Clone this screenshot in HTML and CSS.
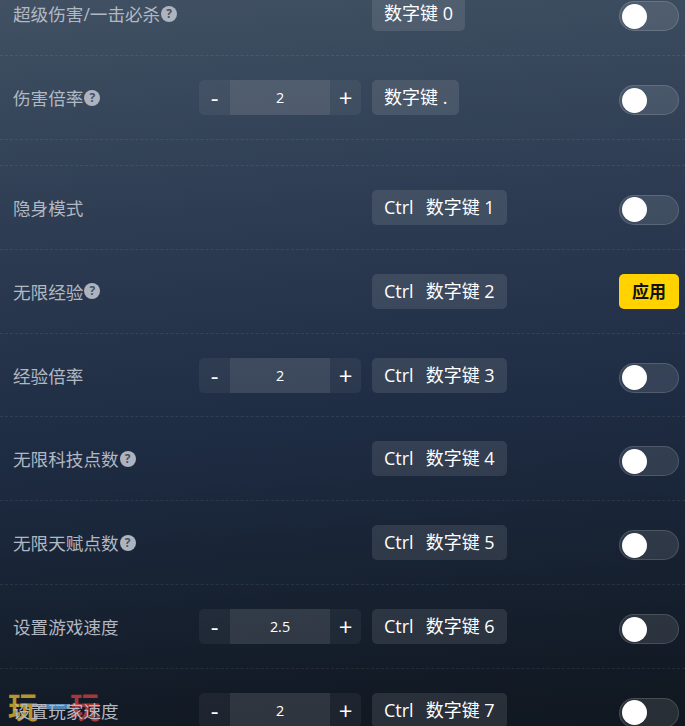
FILE: index.html
```html
<!DOCTYPE html>
<html lang="en">

<head>
    <meta charset="UTF-8">
    <meta name="viewport" content="width=device-width, initial-scale=1.0">
    <title>Cheats</title>
    <link rel="stylesheet" href="styles.css">
</head>

<body>
    <!-- watermark, behind the list -->
    <div class="mark">
        <span class="mark-gold">玩</span><span class="mark-bar"></span><span class="mark-red">玩</span>
    </div>

    <div class="list">
        <div class="row">
            <div class="name">超级伤害/一击必杀<span class="help">?</span></div>
            <div></div>
            <div class="keys"><span class="key">数字键 0</span></div>
            <div class="action"><span class="toggle"></span></div>
        </div>
        <div class="row">
            <div class="name">伤害倍率<span class="help">?</span></div>
            <div class="stepper"><span class="step">-</span><span class="value">2</span><span class="step">+</span></div>
            <div class="keys"><span class="key">数字键 .</span></div>
            <div class="action"><span class="toggle"></span></div>
        </div>

        <div class="spacer"></div>

        <div class="row">
            <div class="name">隐身模式</div>
            <div></div>
            <div class="keys"><span class="key"><span class="ctrl">Ctrl</span>数字键 1</span></div>
            <div class="action"><span class="toggle"></span></div>
        </div>
        <div class="row">
            <div class="name">无限经验<span class="help">?</span></div>
            <div></div>
            <div class="keys"><span class="key"><span class="ctrl">Ctrl</span>数字键 2</span></div>
            <div class="action"><span class="apply">应用</span></div>
        </div>
        <div class="row">
            <div class="name">经验倍率</div>
            <div class="stepper"><span class="step">-</span><span class="value">2</span><span class="step">+</span></div>
            <div class="keys"><span class="key"><span class="ctrl">Ctrl</span>数字键 3</span></div>
            <div class="action"><span class="toggle"></span></div>
        </div>
        <div class="row">
            <div class="name">无限科技点数<span class="help">?</span></div>
            <div></div>
            <div class="keys"><span class="key"><span class="ctrl">Ctrl</span>数字键 4</span></div>
            <div class="action"><span class="toggle"></span></div>
        </div>
        <div class="row">
            <div class="name">无限天赋点数<span class="help">?</span></div>
            <div></div>
            <div class="keys"><span class="key"><span class="ctrl">Ctrl</span>数字键 5</span></div>
            <div class="action"><span class="toggle"></span></div>
        </div>
        <div class="row">
            <div class="name">设置游戏速度</div>
            <div class="stepper"><span class="step">-</span><span class="value">2.5</span><span class="step">+</span></div>
            <div class="keys"><span class="key"><span class="ctrl">Ctrl</span>数字键 6</span></div>
            <div class="action"><span class="toggle"></span></div>
        </div>
        <div class="row">
            <div class="name">设置玩家速度</div>
            <div class="stepper"><span class="step">-</span><span class="value">2</span><span class="step">+</span></div>
            <div class="keys"><span class="key"><span class="ctrl">Ctrl</span>数字键 7</span></div>
            <div class="action"><span class="toggle"></span></div>
        </div>
    </div>
</body>

</html>
```

FILE: styles.css
```css
html,
body {
    height: 100%;
}

body {
    margin: 0;
    overflow: hidden;
    font-family: "Open Sans", "Noto Sans CJK SC", sans-serif;
    background: linear-gradient(175deg, #415163 0%, #2d3c52 30%, #1e2c43 58%, #121a25 92%, #10171f 100%);
    color: #fff;
}

.list {
    position: relative;
    margin-top: -27.7px;
}

.row {
    height: 83.83px;
    box-sizing: border-box;
    padding: 0 6px 0 13px;
    display: grid;
    grid-template-columns: 186px 173px 1fr auto;
    align-items: center;
    border-bottom: 1px dashed rgba(255, 255, 255, 0.08);
}

.spacer {
    height: 26px;
    border-bottom: 1px dashed rgba(255, 255, 255, 0.08);
    box-sizing: border-box;
}

.name {
    display: flex;
    align-items: center;
    font-size: 17.6px;
    color: #b2b8c2;
}

.help {
    width: 16px;
    height: 16px;
    margin-left: 1px;
    border-radius: 50%;
    background: #adb3bf;
    color: #46525f;
    font-size: 12px;
    font-weight: bold;
    line-height: 16px;
    text-align: center;
}

.stepper {
    width: 162px;
    height: 35px;
    display: flex;
    border-radius: 5px;
    overflow: hidden;
    background: rgba(255, 255, 255, 0.05);
}

.step {
    width: 31px;
    text-align: center;
    font-size: 24px;
    line-height: 35px;
}

.value {
    width: 100px;
    background: rgba(255, 255, 255, 0.08);
    text-align: center;
    font-size: 14.4px;
    line-height: 35px;
}

.keys {
    display: flex;
}

.key {
    height: 35px;
    padding: 0 12px;
    border-radius: 5px;
    background: rgba(255, 255, 255, 0.1);
    font-size: 18px;
    line-height: 35px;
    white-space: nowrap;
}

.ctrl {
    margin-right: 12px;
}

.action {
    height: 35px;
    display: flex;
    align-items: flex-end;
}

.toggle {
    width: 60px;
    height: 30px;
    box-sizing: border-box;
    border: 1px solid rgba(255, 255, 255, 0.14);
    border-radius: 15px;
    background: rgba(255, 255, 255, 0.1);
    display: flex;
    align-items: center;
    padding-left: 2px;
}

.toggle::before {
    content: "";
    width: 25px;
    height: 25px;
    border-radius: 50%;
    background: #fff;
}

.apply {
    width: 60px;
    height: 35px;
    border-radius: 5px;
    background: #ffd200;
    color: #111;
    font-size: 17px;
    font-weight: bold;
    line-height: 35px;
    text-align: center;
}

.mark {
    position: absolute;
    left: 8px;
    top: 689px;
    display: flex;
    align-items: center;
    font-size: 30px;
    line-height: 35px;
    font-weight: bold;
}

.mark-gold {
    color: #b8952c;
}

.mark-red {
    color: #a5383b;
}

.mark-bar {
    width: 32px;
    height: 5px;
    background: #4f86b5;
}
```
